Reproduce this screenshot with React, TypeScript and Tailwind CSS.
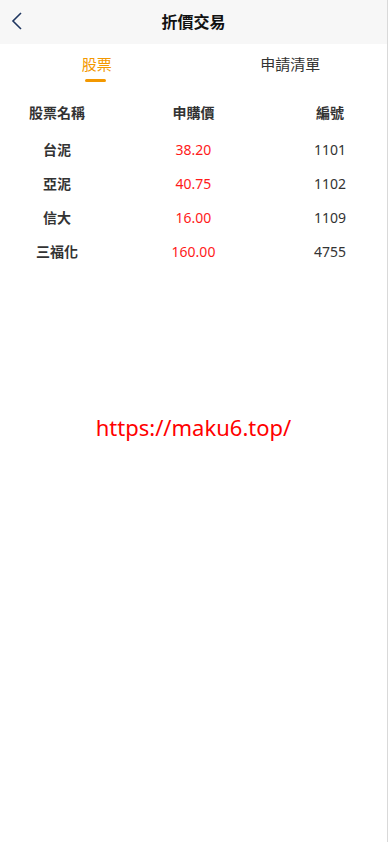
const rows = [
  { name: "台泥", price: "38.20", code: "1101" },
  { name: "亞泥", price: "40.75", code: "1102" },
  { name: "信大", price: "16.00", code: "1109" },
  { name: "三福化", price: "160.00", code: "4755" },
];

const font = { fontFamily: '"Noto Sans", "Noto Sans CJK TC", sans-serif' };

export default function App() {
  return (
    <div className="min-h-[842px] w-[389px] bg-white" style={font}>
      <div className="min-h-[842px] w-[388px] border-r border-[#d9d9d9]">
        <header className="relative flex h-[44px] items-center justify-center bg-[#f7f7f7]">
          <button className="absolute left-[10px] top-[11px] text-[#1f3660]">
            <svg width="14" height="20" viewBox="0 0 14 20" fill="none">
              <path d="M11 2 L3 10 L11 18" stroke="currentColor" strokeWidth="1.6" />
            </svg>
          </button>
          <h1 className="text-[16px] font-bold text-[#111]">折價交易</h1>
        </header>

        <nav className="flex h-[44px]">
          <div className="relative flex flex-1 items-start justify-center pt-[9px]">
            <span className="text-[15px] leading-[22px] text-[#f39800]">股票</span>
            <span className="absolute left-[85px] top-[35px] h-[3px] w-[21px] rounded-full bg-[#f39800]" />
          </div>
          <div className="flex flex-1 items-start justify-center pt-[9px]">
            <span className="text-[15px] leading-[22px] text-[#333]">申請清單</span>
          </div>
        </nav>

        <div className="grid grid-cols-[114px_159px_114px] pt-[15px] text-[14px] text-[#333]">
          <div className="h-[37px] text-center font-semibold leading-[20px]">股票名稱</div>
          <div className="h-[37px] text-center font-semibold leading-[20px]">申購價</div>
          <div className="h-[37px] text-center font-semibold leading-[20px]">編號</div>
          {rows.map((r) => (
            <>
              <div key={r.name} className="h-[34px] text-center font-semibold leading-[20px]">{r.name}</div>
              <div key={r.price} className="h-[34px] text-center leading-[20px] text-[#ff1a1a]">{r.price}</div>
              <div key={r.code} className="h-[34px] text-center leading-[20px]">{r.code}</div>
            </>
          ))}
        </div>

        <p className="pt-[137px] text-center text-[22px] leading-[28px] text-[#ff0000]">https://maku6.top/</p>
      </div>
    </div>
  );
}
